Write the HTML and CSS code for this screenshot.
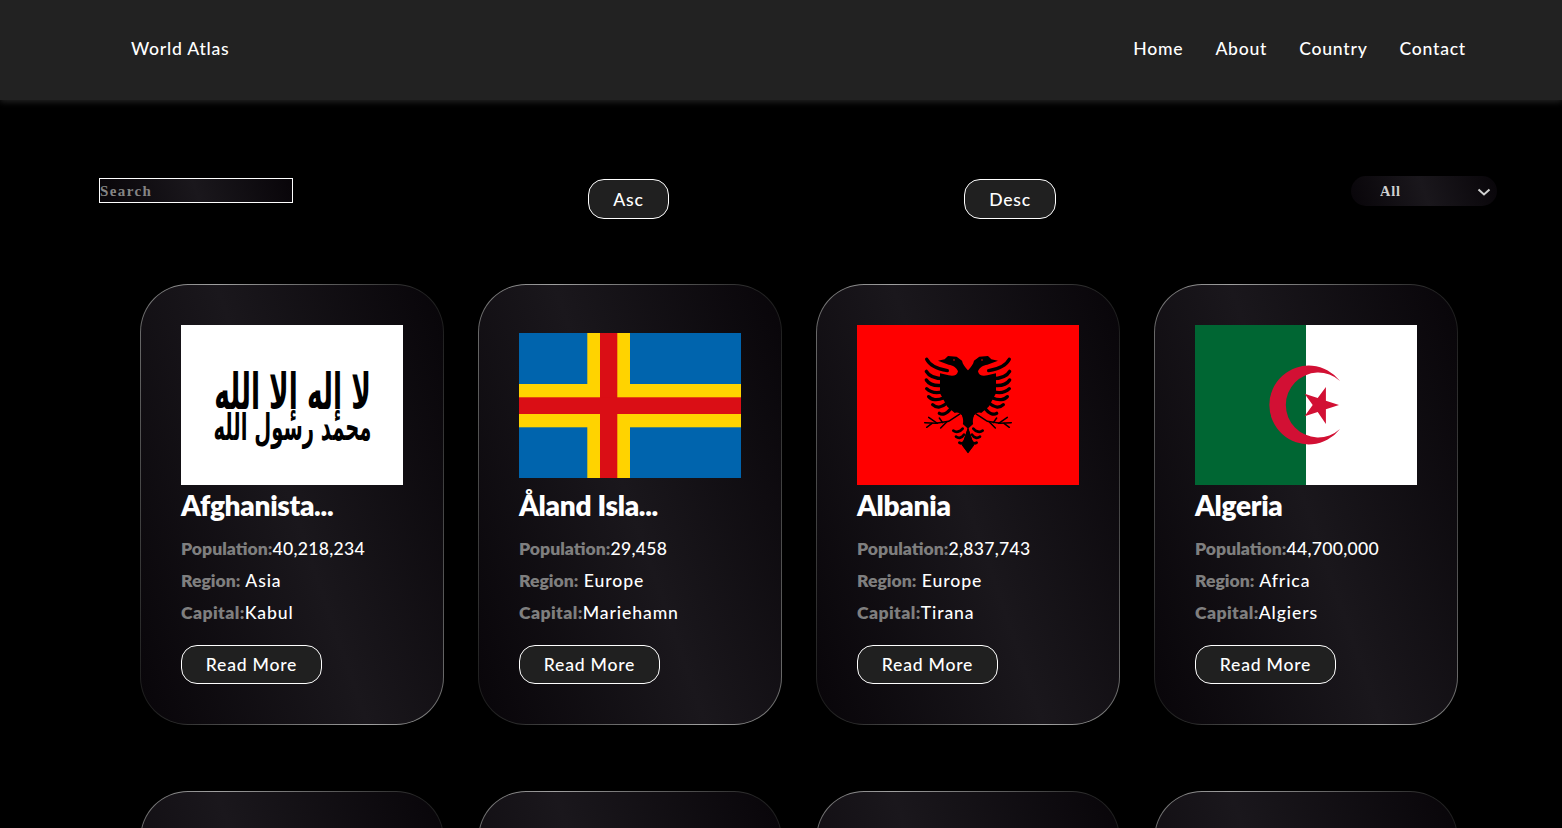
FILE: index.html
```html
<!DOCTYPE html>
<html lang="en">
<head>
<meta charset="utf-8">
<title>World Atlas</title>
<link rel="stylesheet" href="styles.css">
</head>
<body>
<header class="site-header">
  <a class="logo" href="#">World Atlas</a>
  <nav class="nav">
    <a href="#">Home</a>
    <a href="#">About</a>
    <a href="#">Country</a>
    <a href="#">Contact</a>
  </nav>
</header>
<main>
  <section class="filters">
    <input class="search" type="text" placeholder="Search">
    <button class="btn sort">Asc</button>
    <button class="btn sort">Desc</button>
    <div class="region-wrap">
      <select class="region"><option>All</option><option>Africa</option><option>Asia</option><option>Europe</option></select>
      <svg class="chevron" width="14" height="8" viewBox="0 0 14 8"><path d="M1.5 1.5L7 6.5L12.5 1.5" fill="none" stroke="#d0d0d0" stroke-width="2"/></svg>
    </div>
  </section>
  <section class="grid">
    <article class="card">
      <div class="flag">
        <svg width="222" height="160" viewBox="0 0 222 160">
          <rect width="222" height="160" fill="#fff"/>
          <text class="shahada" transform="translate(111.5 84) scale(1.2 2.3)" text-anchor="middle" direction="rtl">لا إله إلا الله</text>
          <text class="shahada" transform="translate(111.5 115) scale(.89 1.7)" text-anchor="middle" direction="rtl">محمد رسول الله</text>
        </svg>
      </div>
      <h2 class="name">Afghanista...</h2>
      <p class="row"><b>Population:</b><span class="num">40,218,234</span></p>
      <p class="row"><b>Region:</b> Asia</p>
      <p class="row"><b class="cap">Capital:</b>Kabul</p>
      <button class="btn more">Read More</button>
    </article>
    <article class="card">
      <div class="flag">
        <svg width="222" height="145" viewBox="0 0 222 145">
          <rect width="222" height="145" fill="#0064ad"/>
          <rect x="68.3" width="42.7" height="145" fill="#ffd300"/>
          <rect y="51" width="222" height="43.3" fill="#ffd300"/>
          <rect x="81" width="17.3" height="145" fill="#da0e15"/>
          <rect y="64.3" width="222" height="16.7" fill="#da0e15"/>
        </svg>
      </div>
      <h2 class="name">Åland Isla...</h2>
      <p class="row"><b>Population:</b><span class="num">29,458</span></p>
      <p class="row"><b>Region:</b> Europe</p>
      <p class="row"><b class="cap">Capital:</b>Mariehamn</p>
      <button class="btn more">Read More</button>
    </article>
    <article class="card">
      <div class="flag">
        <svg width="222" height="160" viewBox="0 0 222 160">
          <defs>
            <g id="eagle-half">
              <path fill="#000" d="M203 92C214 80 220 72 222 62L238 50L264 48L274 58L294 62L274 70L262 74C250 76 238 82 234 94C236 106 248 110 262 106L288 100L288 160L266 200L240 222L222 226L222 250L204 266Z"/>
              <g fill="none" stroke="#000" stroke-width="10" stroke-linecap="round">
                <path d="M266 92C292 88 318 78 328 58"/>
                <path d="M276 116C300 116 320 110 329 94"/>
                <path d="M282 136C302 138 320 134 329 120"/>
                <path d="M282 156C300 160 318 156 328 146"/>
                <path d="M278 174C296 182 314 180 322 170"/>
                <path d="M268 190C284 204 300 204 310 194"/>
                <path d="M254 204C266 220 280 226 290 220"/>
              </g>
              <path fill="#ff0000" d="M222 228C228 216 240 216 246 220C244 236 238 254 226 262C218 258 216 240 222 228Z"/>
              <path fill="#000" d="M204 340L186 316L204 262L222 316Z"/>
              <g fill="none" stroke="#000" stroke-width="8" stroke-linecap="round">
                <path d="M220 266C228 276 240 278 248 272"/>
                <path d="M216 284C222 294 232 296 240 290"/>
                <path d="M212 300C216 310 224 312 230 308"/>
              </g>
              <g fill="none" stroke="#000" stroke-width="4.5" stroke-linecap="round">
                <path d="M228 222L262 244L300 250L334 248"/>
                <path d="M268 246L286 264M296 250L322 232M312 250L328 262M280 248L290 234"/>
              </g>
              <circle cx="246" cy="60" r="2.5" fill="#ff0000"/>
            </g>
          </defs>
          <rect width="222" height="160" fill="#ff0000"/>
          <g transform="translate(43 15) scale(.3333)">
            <use href="#eagle-half"/>
            <use href="#eagle-half" transform="translate(408 0) scale(-1 1)"/>
          </g>
        </svg>
      </div>
      <h2 class="name">Albania</h2>
      <p class="row"><b>Population:</b><span class="num">2,837,743</span></p>
      <p class="row"><b>Region:</b> Europe</p>
      <p class="row"><b class="cap">Capital:</b>Tirana</p>
      <button class="btn more">Read More</button>
    </article>
    <article class="card">
      <div class="flag">
        <svg width="222" height="160" viewBox="0 0 222 160">
          <rect width="222" height="160" fill="#fff"/>
          <rect width="111" height="160" fill="#006633"/>
          <path fill="#d21034" d="M145 56A39.4 39.4 0 1 0 145 104A32.4 32.4 0 1 1 145 56Z"/>
          <polygon fill="#d21034" points="144,80 130.9,84.3 130.9,99.1 122.7,87 109.6,91.2 117.7,80 109.6,68.8 122.7,73 130.9,61.9 130.9,75.7"/>
        </svg>
      </div>
      <h2 class="name">Algeria</h2>
      <p class="row"><b>Population:</b><span class="num">44,700,000</span></p>
      <p class="row"><b>Region:</b> Africa</p>
      <p class="row"><b class="cap">Capital:</b>Algiers</p>
      <button class="btn more">Read More</button>
    </article>
    <article class="card"><div class="flag"></div><h2 class="name">American S...</h2><p class="row"><b>Population:</b><span class="num">55,197</span></p><p class="row"><b>Region:</b> Oceania</p><p class="row"><b class="cap">Capital:</b>Pago Pago</p><button class="btn more">Read More</button></article>
    <article class="card"><div class="flag"></div><h2 class="name">Andorra</h2><p class="row"><b>Population:</b><span class="num">77,265</span></p><p class="row"><b>Region:</b> Europe</p><p class="row"><b class="cap">Capital:</b>Andorra la Vella</p><button class="btn more">Read More</button></article>
    <article class="card"><div class="flag"></div><h2 class="name">Angola</h2><p class="row"><b>Population:</b><span class="num">32,866,268</span></p><p class="row"><b>Region:</b> Africa</p><p class="row"><b class="cap">Capital:</b>Luanda</p><button class="btn more">Read More</button></article>
    <article class="card"><div class="flag"></div><h2 class="name">Anguilla</h2><p class="row"><b>Population:</b><span class="num">13,452</span></p><p class="row"><b>Region:</b> Americas</p><p class="row"><b class="cap">Capital:</b>The Valley</p><button class="btn more">Read More</button></article>
  </section>
</main>
</body>
</html>
```
FILE: styles.css
```css
* { box-sizing: border-box; }
html, body { margin: 0; background: #000; }
html { scrollbar-width: none; }
body { font-family: "Lato", "Open Sans", sans-serif; color: #fff; }

.site-header {
  height: 100px;
  background: #222;
  display: flex;
  align-items: center;
  justify-content: space-between;
  padding: 0 96px 3px 131px;
  box-shadow: 0 2px 6px #222;
}
.logo, .nav a { color: #fff; text-decoration: none; font-size: 17.6px; font-weight: 500; letter-spacing: .75px; }
.nav { display: flex; gap: 32px; }

.filters {
  display: flex;
  justify-content: space-between;
  align-items: flex-start;
  margin-top: 76px;
  padding: 0 65px 0 99px;
}
.search, .region {
  background: linear-gradient(71deg, #080509, #1a171c, #080509);
}
.search {
  width: 194px;
  height: 25px;
  margin-top: 2px;
  border: 1px solid #fff;
  padding: 1px 0 0;
  color: #fff;
  font: bold 15px "Liberation Serif", serif;
  letter-spacing: 1.4px;
  outline: none;
}
.search::placeholder { color: #858585; opacity: 1; }
.btn {
  background: #202020;
  color: #fff;
  border: 1px solid #fff;
  border-radius: 16px;
  font-family: "Lato", "Open Sans", sans-serif;
  font-size: 17.6px;
  font-weight: 500;
  letter-spacing: .75px;
}
.sort { height: 40px; margin-top: 3px; width: 81px; padding: 0; }
.sort + .sort { width: 92px; }
.region-wrap { position: relative; width: 146px; height: 30px; }
.region {
  appearance: none;
  display: block;
  width: 100%;
  height: 100%;
  border: none;
  border-radius: 16px;
  padding-left: 29px;
  color: #d0d0d0;
  font: bold 14.4px "Liberation Serif", serif;
  letter-spacing: .8px;
  outline: none;
}
.chevron { position: absolute; top: 12px; right: 6px; pointer-events: none; }

.grid {
  display: grid;
  grid-template-columns: repeat(4, 304px);
  gap: 66px 34px;
  margin: 65px 0 0 140px;
}
.card {
  height: 441px;
  padding: 40px;
  border: 1px solid transparent;
  border-radius: 48px;
  background:
    linear-gradient(71deg, #080509, #1a171c, #080509) padding-box,
    linear-gradient(71deg, #161616, #a0a0a0, #161616) border-box;
}
.flag {
  width: 222px;
  height: 160px;
  display: flex;
  align-items: center;
}
.flag svg { display: block; }
.shahada {
  font: bold 22px "DejaVu Sans", sans-serif;
  fill: #000;
}
.name {
  margin: -1px 0 7px;
  height: 42px;
  font-size: 28px;
  line-height: 42px;
  font-weight: 800;
  letter-spacing: -.3px;
  white-space: nowrap;
}
.row {
  margin: 0;
  height: 32px;
  line-height: 32px;
  font-size: 17.6px;
  font-weight: 500;
  letter-spacing: .9px;
}
.row b { color: #7f7f7f; font-weight: 800; letter-spacing: 0; }
.row b.cap { letter-spacing: .4px; }
.num { letter-spacing: .3px; }
.more { width: 141px; height: 39px; margin-top: 16px; padding: 0; display: block; }
```
